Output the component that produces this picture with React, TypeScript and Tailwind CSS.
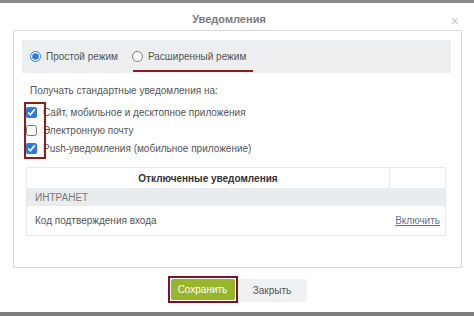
import React from "react";

export default function App() {
  return (
    <div
      className="w-[474px] h-[316px] flex flex-col bg-white overflow-hidden text-[#333]"
      style={{ fontFamily: '"Liberation Sans", Arial, sans-serif' }}
    >
      <div className="h-[3px] bg-[#8a8a8a] shrink-0" />
      <div className="flex-1 flex flex-col relative">
        <div className="h-[27px] flex items-center justify-center relative pr-[16px]">
          <span className="text-[11px] font-bold text-[#7b7b7b] mt-[6px]">Уведомления</span>
          <span className="absolute right-[15px] top-[11px] text-[14px] leading-none text-[#c8c8c8]">×</span>
        </div>
        <div className="mx-[13px] mr-[12px] h-[238px] border border-[#dcdcdc] pt-[9px] pl-[8px] pr-[10px] relative">
          <div className="h-[33px] bg-[#eceef0] flex items-center pl-[8px] text-[10px] text-[#555] relative">
            <label className="flex items-center gap-[5px]">
              <input type="radio" defaultChecked name="mode" className="w-[11px] h-[11px] m-0 accent-[#2a7ae2]" />
              <span>Простой режим</span>
            </label>
            <label className="flex items-center gap-[5px] ml-[14px]">
              <input type="radio" name="mode" className="w-[11px] h-[11px] m-0" />
              <span>Расширенный режим</span>
            </label>
            <div className="absolute left-[111px] top-[30px] w-[120px] h-[2px] bg-[#8b1c24]" />
          </div>
          <div className="pl-[8px] mt-[11px] text-[10px] text-[#555] leading-[14px]">Получать стандартные уведомления на:</div>
          <div className="pl-[4px] mt-[7px] flex flex-col gap-[4px] text-[10px] text-[#555] relative">
            {[
              ["Сайт, мобильное и десктопное приложения", true],
              ["Электронную почту", false],
              ["Push-уведомления (мобильное приложение)", true],
            ].map(([t, c], i) => (
              <label key={i} className="flex items-center gap-[6px] h-[14px]">
                <input
                  type="checkbox"
                  defaultChecked={c as boolean}
                  className="w-[11px] h-[11px] m-0 accent-[#2a7ae2]"
                />
                <span>{t as string}</span>
              </label>
            ))}
            <div className="absolute left-[2px] top-[-3px] w-[22px] h-[57px] border-2 border-[#8b1c24]" />
          </div>
          <div className="mt-[12px] ml-[4px] mr-[5px] border border-[#e6eaec] text-[10px]">
            <div className="flex h-[20px]">
              <div className="flex-1 flex items-center justify-center font-bold text-[#333] border-r border-[#e6eaec]">
                Отключенные уведомления
              </div>
              <div className="w-[55px]" />
            </div>
            <div className="h-[18px] bg-[#e9ecee] flex items-center pl-[8px] text-[#777] text-[10px]">ИНТРАНЕТ</div>
            <div className="h-[29px] flex items-center pl-[8px] pr-[5px] text-[#555]">
              <span className="flex-1">Код подтверждения входа</span>
              <span className="underline text-[#5a7598]">Включить</span>
            </div>
          </div>
        </div>
        <div className="flex justify-center items-start mt-[8px]">
          <div className="border-2 border-[#7a1421] p-[1px]">
            <div className="w-[64px] h-[21px] bg-[#98b62a] rounded-[2px] flex items-center justify-center text-[10px] text-white">
              Сохранить
            </div>
          </div>
          <div className="w-[69px] h-[23px] mt-[3px] bg-[#f0f1f2] rounded-[2px] flex items-center justify-center text-[10px] text-[#555]">
            Закрыть
          </div>
        </div>
      </div>
      <div className="h-[4px] bg-[#7d7d7d] shrink-0" />
    </div>
  );
}
